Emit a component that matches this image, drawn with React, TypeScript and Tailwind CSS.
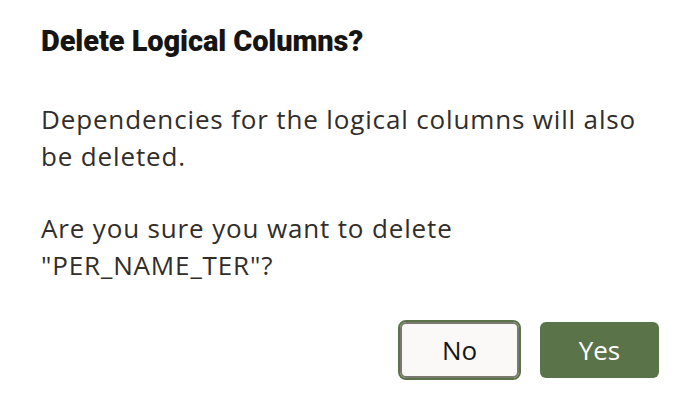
import React from 'react';

export default function App() {
  return (
    <div className="w-[698px] h-[414px] bg-white flex flex-col font-['Open_Sans',sans-serif] text-[#312d2a]">
      <div className="pl-[41px] pr-[39px] pt-[24px] flex flex-col flex-1">
        <h1 className="font-['Roboto',sans-serif] font-black text-[29px] leading-[34px] tracking-[-0.1px] text-[#161513]">
          Delete Logical Columns?
        </h1>
        <div className="mt-[43px] text-[26px] leading-[37px] tracking-[0.85px]">
          <p>Dependencies for the logical columns will also be deleted.</p>
          <p className="mt-[35px]">Are you sure you want to delete "PER_NAME_TER"?</p>
        </div>
        <div className="flex justify-end gap-[21px] mt-[38px]">
          <button className="w-[119px] h-[56px] rounded-[6px] border-2 border-[#7a7870] outline-2 outline-[#5b7349] bg-[#fbf9f8] text-[26px] text-[#161513]">
            No
          </button>
          <button className="w-[119px] h-[56px] rounded-[6px] bg-[#5b7349] text-[26px] text-white">
            Yes
          </button>
        </div>
      </div>
    </div>
  );
}
